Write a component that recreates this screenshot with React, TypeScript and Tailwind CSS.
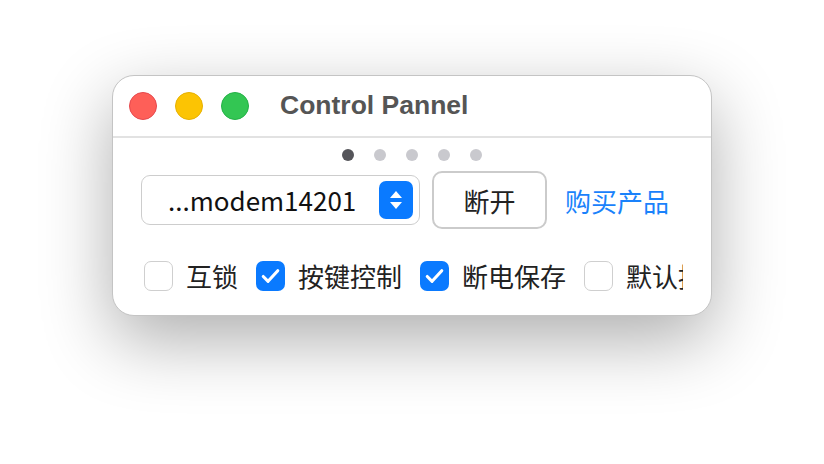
import * as React from "react";

const CJK = "font-['Noto_Sans_CJK_SC','Noto_Sans',sans-serif]";

function Check({ on, label }: { on: boolean; label: string }) {
  return (
    <label className="flex shrink-0 items-center">
      {on ? (
        <span className="flex h-[30px] w-[29px] shrink-0 items-center justify-center rounded-[7px] bg-[#0a7aff]">
          <svg viewBox="0 0 30 30" className="h-[30px] w-[29px]">
            <path
              d="M7.5 15.5l5 5L22.5 9.5"
              fill="none"
              stroke="white"
              strokeWidth="3.2"
              strokeLinecap="round"
              strokeLinejoin="round"
            />
          </svg>
        </span>
      ) : (
        <span className="h-[30px] w-[29px] shrink-0 rounded-[7px] border border-[#cfcfcf] bg-white" />
      )}
      <span className="ml-[13px] whitespace-nowrap text-[26px] leading-[40px] text-[#222]">
        {label}
      </span>
    </label>
  );
}

export default function App() {
  const dots = [true, false, false, false, false];

  return (
    <div className="h-[464px] w-[824px] bg-white pt-[75px]">
      <div className="mx-auto h-[241px] w-[600px] overflow-hidden rounded-[22px] border border-[#c4c4c4] bg-white shadow-[0_24px_70px_rgba(0,0,0,0.32)]">
        {/* title bar */}
        <div className="flex h-[62px] items-center border-b-2 border-[#e2e2e2] pl-[16px]">
          <div className="flex gap-[18px]">
            <span className="h-[28px] w-[28px] rounded-full border border-[#e5484d] bg-[#fe5f58]" />
            <span className="h-[28px] w-[28px] rounded-full border border-[#e6b000] bg-[#fcc403]" />
            <span className="h-[28px] w-[28px] rounded-full border border-[#23b146] bg-[#33c653]" />
          </div>
          <span className="ml-[31px] font-['Liberation_Sans',sans-serif] text-[26.5px] font-bold text-[#555]">
            Control Pannel
          </span>
        </div>

        <div className={`px-[28px] ${CJK}`}>
          {/* page dots */}
          <div className="mt-[11px] flex justify-center gap-[20px]">
            {dots.map((active, i) => (
              <span
                key={i}
                className={
                  active
                    ? "h-[12px] w-[12px] rounded-full bg-[#55555a]"
                    : "h-[12px] w-[12px] rounded-full bg-[#c9c9ce]"
                }
              />
            ))}
          </div>

          {/* port row */}
          <div className="mt-[10px] flex items-center">
            <div className="flex h-[50px] w-[279px] items-center rounded-[9px] border border-[#cdcdcd] pl-[26px] pr-[6px]">
              <span className="flex-1 text-[26px] leading-[40px] text-[#111]">
                ...modem14201
              </span>
              <span className="flex h-[38px] w-[34px] flex-col items-center justify-center gap-[4px] rounded-[7px] bg-[#0a7aff]">
                <svg viewBox="0 0 12 7" className="h-[7px] w-[12px]">
                  <path d="M6 0L12 7H0z" fill="white" />
                </svg>
                <svg viewBox="0 0 12 7" className="h-[7px] w-[12px]">
                  <path d="M0 0H12L6 7z" fill="white" />
                </svg>
              </span>
            </div>
            <button className="ml-[12px] flex h-[58px] w-[115px] items-center justify-center rounded-[10px] border-2 border-[#cbcbcb] bg-white text-[26px] text-[#222]">
              断开
            </button>
            <a className="ml-[18px] text-[26px] text-[#1a82fb]">购买产品</a>
          </div>

          {/* options row */}
          <div className="mt-[27px] flex items-center gap-[18px] overflow-hidden pl-[3px]">
            <Check on={false} label="互锁" />
            <Check on label="按键控制" />
            <Check on label="断电保存" />
            <Check on={false} label="默认按键" />
          </div>
        </div>
      </div>
    </div>
  );
}
